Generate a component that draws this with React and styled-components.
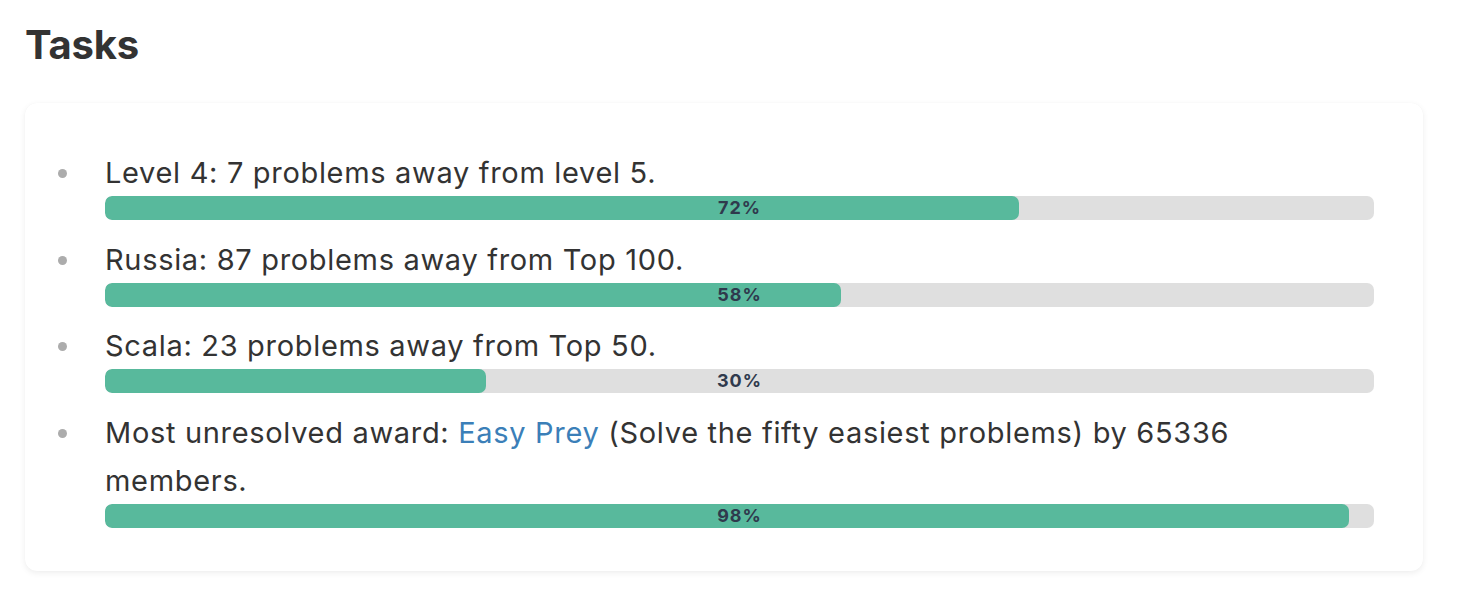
import React from 'react';
import styled, { createGlobalStyle } from 'styled-components';

const GlobalStyle = createGlobalStyle`
body {
  margin: 0;
  background: #ffffff;
  font-family: Inter, "Liberation Sans", sans-serif;
  color: #333333;
}
`

const Page = styled.div`
padding: 18px 39px 26px 25px;
`

const Title = styled.h2`
margin: 0 0 31px 0;
font-size: 40px;
line-height: 54px;
font-weight: 700;
color: #333333;
letter-spacing: -0.2px;
`

const Card = styled.div`
background: #ffffff;
border-radius: 12px;
box-shadow: 0 2px 6px rgba(0, 0, 0, 0.07), 0 0 1px rgba(0, 0, 0, 0.04);
padding: 46px 49px 28px 0;
`

const List = styled.ul`
list-style: none;
margin: 0;
padding: 0 0 0 33px;
`

const Item = styled.li`
display: grid;
grid-template-columns: 47px 1fr;
font-size: 29px;
letter-spacing: 0.68px;
line-height: 48px;
margin-bottom: 15.5px;
`

const Dot = styled.span`
width: 9px;
height: 9px;
margin-top: 20px;
border-radius: 50%;
background: #acacac;
`

const Body = styled.div`
min-width: 0;
`

const Link = styled.a`
color: #3b7fb8;
text-decoration: none;
`

const Track = styled.div`
display: flex;
position: relative;
height: 24px;
margin-top: -1px;
background: #dfdfdf;
border-radius: 7px;
overflow: hidden;
`

const Fill = styled.div`
background: #58b99c;
border-radius: 7px;
height: 100%;
`

const Label = styled.span`
position: absolute;
inset: 0;
display: flex;
align-items: center;
justify-content: center;
font-size: 18px;
font-weight: 700;
letter-spacing: 1px;
color: #2f3a4d;
line-height: 24px;
`

const Progress = ({ value }) => (
  <Track>
    <Fill style={{ width: `${value}%` }} />
    <Label>{value}%</Label>
  </Track>
)

const tasks = [
  { id: 1, text: 'Level 4: 7 problems away from level 5.', value: 72 },
  { id: 2, text: 'Russia: 87 problems away from Top 100.', value: 58 },
  { id: 3, text: 'Scala: 23 problems away from Top 50.', value: 30 },
]

function App() {
  return (
    <Page>
      <GlobalStyle />
      <Title>Tasks</Title>
      <Card>
        <List>
          {tasks.map(task => (
            <Item key={task.id}>
              <Dot />
              <Body>
                {task.text}
                <Progress value={task.value} />
              </Body>
            </Item>
          ))}
          <Item>
            <Dot />
            <Body>
              Most unresolved award: <Link href="#">Easy Prey</Link> (Solve the fifty easiest problems) by 65336 members.
              <Progress value={98} />
            </Body>
          </Item>
        </List>
      </Card>
    </Page>
  )
}

export default App;
